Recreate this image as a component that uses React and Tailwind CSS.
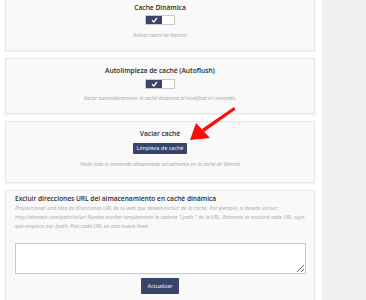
import React from 'react';

const font = { fontFamily: '"Open Sans", "Liberation Sans", sans-serif' };

const Toggle = () => (
  <div className="flex h-[10px] w-[30px] border border-[#c9c9c9] bg-white">
    <div className="flex w-[16px] items-center justify-center bg-[#37456a]">
      <svg width="7" height="6" viewBox="0 0 7 6">
        <path d="M1 3.2 L2.8 5 L6 1" fill="none" stroke="#fff" strokeWidth="1.3" />
      </svg>
    </div>
    <div className="flex-1 bg-white" />
  </div>
);

const Card = ({ className = '', children }) => (
  <div className={`border border-[#e6e6e6] bg-[#f9f9f9] shadow-[0_1px_1px_rgba(0,0,0,0.06)] ${className}`}>
    {children}
  </div>
);

const Desc = ({ children }) => (
  <p className="text-[5px] italic leading-[6px] text-[#a3a3a3]">{children}</p>
);

export default function App() {
  return (
    <div className="flex h-[300px] w-[366px] overflow-hidden bg-white" style={font}>
      <div className="relative w-[315px] pl-[5px]">
        {/* Cache dinamica */}
        <Card className="mt-[-5px] flex h-[56px] flex-col items-center pt-[8px]">
          <h3 className="text-[6.7px] font-semibold leading-[8px] text-[#2a2a2a]">Cache Dinámica</h3>
          <div className="mt-[3px]"><Toggle /></div>
          <div className="mt-[7px]"><Desc>Activar caché de Varnish</Desc></div>
        </Card>

        {/* Autoflush */}
        <Card className="mt-[7px] flex h-[56px] flex-col items-center pt-[8px]">
          <h3 className="text-[6.7px] font-semibold leading-[8px] text-[#2a2a2a]">Autolimpieza de caché (Autoflush)</h3>
          <div className="mt-[4px]"><Toggle /></div>
          <div className="mt-[6px]"><Desc>Vaciar automáticamente la caché dinámica al modificar el contenido.</Desc></div>
        </Card>

        {/* Vaciar cache */}
        <Card className="mt-[7px] flex h-[62px] flex-col items-center pt-[8px]">
          <h3 className="text-[6.7px] font-semibold leading-[8px] text-[#2a2a2a]">Vaciar caché</h3>
          <button className="mt-[5px] h-[11px] rounded-[1px] bg-[#37456a] px-[4px] text-[5.5px] leading-[11px] text-white">
            Limpieza de caché
          </button>
          <div className="mt-[7px]"><Desc>Vacía todo el contenido almacenado actualmente en la caché de Varnish</Desc></div>
        </Card>

        {/* Excluir URLs */}
        <Card className="mt-[7px] h-[120px] px-[9px] pt-[4px]">
          <h3 className="whitespace-nowrap text-[6.6px] font-semibold leading-[8px] text-[#2a2a2a]">
            Excluir direcciones URL del almacenamiento en caché dinámica
          </h3>
          <div className="mt-[1px] text-[5.25px] italic leading-[9px] text-[#a8a8a8]">
            <span className="block whitespace-nowrap">Proporcionar una lista de direcciones URL de tu web que desees excluir de la caché. Por ejemplo, si deseas excluir:</span>
            <span className="block whitespace-nowrap">http://domain.com/path/to/url Puedes escribir simplemente la cadena "/path " de la URL. Entonces se excluirá cada URL cuyo</span>
            <span className="block whitespace-nowrap">que empiece por /path. Pon cada URL en una nueva línea.</span>
          </div>
          <textarea
            className="mt-[12px] block h-[31px] w-[291px] resize border border-[#c8c8c8] bg-white outline-none"
            defaultValue=""
          />
          <div className="mt-[4px] flex justify-center">
            <button className="h-[16px] w-[38px] rounded-[1px] bg-[#37456a] text-[5.5px] text-white">Actualizar</button>
          </div>
        </Card>

        {/* red arrow annotation */}
        <svg className="absolute left-0 top-0" width="315" height="300" viewBox="0 0 315 300">
          <path d="M234 107 L235.5 109.5 L204 132 L202 129 Z" fill="#ff0a0a" />
          <path d="M190 140 L196 123 L210 138 Z" fill="#ff0a0a" />
        </svg>
      </div>
      <div className="w-[7px] bg-white" />
      <div className="flex-1 bg-[#f0f0f0]" />
    </div>
  );
}
